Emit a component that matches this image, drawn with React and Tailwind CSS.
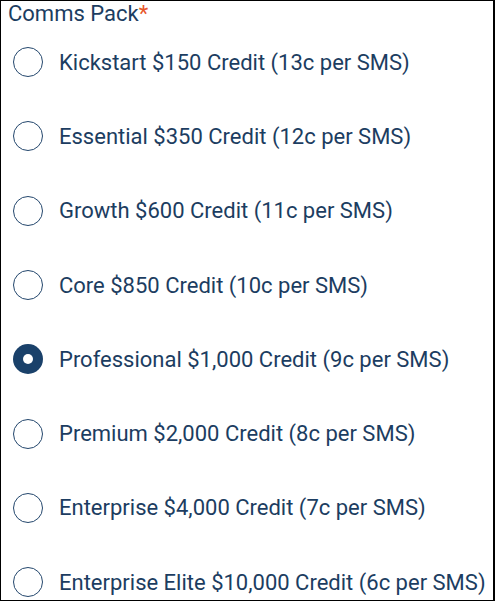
import React, { useState } from 'react';

const PACKS = [
  'Kickstart $150 Credit (13c per SMS)',
  'Essential $350 Credit (12c per SMS)',
  'Growth $600 Credit (11c per SMS)',
  'Core $850 Credit (10c per SMS)',
  'Professional $1,000 Credit (9c per SMS)',
  'Premium $2,000 Credit (8c per SMS)',
  'Enterprise $4,000 Credit (7c per SMS)',
  'Enterprise Elite $10,000 Credit (6c per SMS)',
];

const Radio = ({ checked }) =>
  checked ? (
    <span className="flex h-[30px] w-[30px] shrink-0 items-center justify-center rounded-full bg-[#1a416a]">
      <span className="h-[10px] w-[10px] rounded-full bg-white" />
    </span>
  ) : (
    <span className="h-[30px] w-[30px] shrink-0 rounded-full border-[1.5px] border-[#24476d] bg-white" />
  );

const App = () => {
  const [selected, setSelected] = useState(4);

  return (
    <div
      className="h-[601px] w-[495px] overflow-hidden border border-r-2 border-black bg-white text-[#1c3d61]"
      style={{ fontFamily: 'Roboto, "Liberation Sans", sans-serif' }}
    >
      <div className="pl-[7px] pt-[1px] text-[22px] leading-[24px]">
        Comms Pack<span className="text-[#e8572a]">*</span>
      </div>
      <div className="-mt-[1px] flex flex-col">
        {PACKS.map((label, i) => (
          <label
            key={label}
            onClick={() => setSelected(i)}
            className="flex h-[74.3px] shrink-0 cursor-pointer items-center gap-[16px] pl-[12px]"
          >
            <Radio checked={selected === i} />
            <span className="whitespace-nowrap text-[22px]">{label}</span>
          </label>
        ))}
      </div>
    </div>
  );
};

export default App;
